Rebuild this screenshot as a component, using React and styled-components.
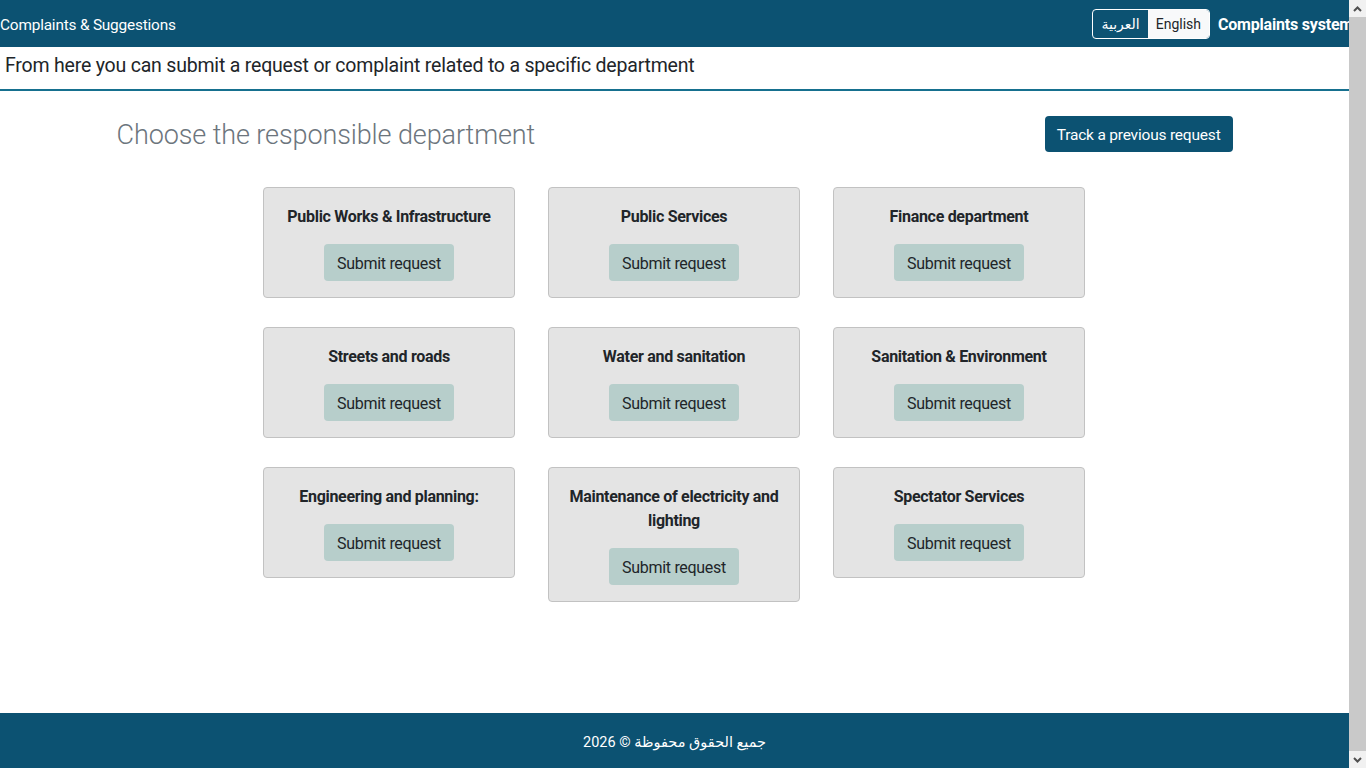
import React from 'react'
import styled, { createGlobalStyle } from 'styled-components'

const departments = [
  'Public Works & Infrastructure',
  'Public Services',
  'Finance department',
  'Streets and roads',
  'Water and sanitation',
  'Sanitation & Environment',
  'Engineering and planning:',
  'Maintenance of electricity and lighting',
  'Spectator Services',
]

const Chevron = ({ up }) => (
  <svg width="9" height="6" viewBox="0 0 9 6">
    <path
      d={up ? 'M1 5 L4.5 1.5 L8 5' : 'M1 1 L4.5 4.5 L8 1'}
      fill="none"
      stroke="#505050"
      strokeWidth="2"
    />
  </svg>
)

const App = () => {
  return (
    <>
      <GlobalStyle />
      <Page>
        <TopBar>
          <SiteTitle>Complaints &amp; Suggestions</SiteTitle>
          <RightGroup>
            <LangToggle>
              <LangButton lang="ar">العربية</LangButton>
              <LangButton active>English</LangButton>
            </LangToggle>
            <Brand>Complaints system</Brand>
          </RightGroup>
        </TopBar>

        <Intro>From here you can submit a request or complaint related to a specific department</Intro>

        <Main>
          <HeadRow>
            <Heading>Choose the responsible department</Heading>
            <TrackButton>Track a previous request</TrackButton>
          </HeadRow>

          <Grid>
            {departments.map((name) => (
              <Card key={name}>
                <CardTitle>{name}</CardTitle>
                <SubmitButton>Submit request</SubmitButton>
              </Card>
            ))}
          </Grid>
        </Main>

        <Footer>
          <FooterText dir="rtl">جميع الحقوق محفوظة © 2026</FooterText>
        </Footer>
      </Page>

      {/* page scrollbar as it shows in the screenshot */}
      <ScrollTrack>
        <ScrollArrow><Chevron up /></ScrollArrow>
        <ScrollThumb />
        <ScrollArrow><Chevron /></ScrollArrow>
      </ScrollTrack>
    </>
  )
}

export default App

const GlobalStyle = createGlobalStyle`
  body {
    margin: 0;
    overflow-x: hidden;
    font-family: Roboto, "Noto Sans", sans-serif;
    color: #212529;
    background: #fff;
  }
  * {
    box-sizing: border-box;
  }
`
const Page = styled.div`
  display: flex;
  flex-direction: column;
  width: calc(100vw - 17px);
  min-height: 100vh;
  overflow: hidden;
`
const TopBar = styled.header`
  display: flex;
  align-items: center;
  justify-content: space-between;
  height: 47px;
  background-color: #0c5272;
  color: #fff;
  white-space: nowrap;
`
const SiteTitle = styled.div`
  font-size: 15.4px;
  letter-spacing: -0.2px;
  padding-top: 2px;
`
const RightGroup = styled.div`
  display: flex;
  align-items: center;
  gap: 8px;
  margin-right: -4px;
`
const LangToggle = styled.div`
  display: flex;
  height: 30px;
  border: 1px solid #fff;
  border-radius: 4px;
  overflow: hidden;
`
const LangButton = styled.span`
  display: flex;
  align-items: center;
  padding: 0 8px;
  font-size: 14px;
  font-family: Roboto, "Noto Sans", "DejaVu Sans", sans-serif;
  background-color: ${(p) => (p.active ? '#f8f9fa' : 'transparent')};
  color: ${(p) => (p.active ? '#212529' : '#fff')};
`
const Brand = styled.div`
  font-size: 16px;
  font-weight: 700;
  letter-spacing: -0.2px;
  padding-top: 2px;
`
const Intro = styled.div`
  height: 44px;
  padding: 0 5px;
  font-size: 19.5px;
  line-height: 38px;
  letter-spacing: -0.2px;
  border-bottom: 2px solid #16708f;
`
const Main = styled.main`
  flex: 1;
  width: 100%;
  max-width: 1140px;
  margin: 0 auto;
  padding: 25px 12px 40px;
`
const HeadRow = styled.div`
  display: flex;
  align-items: center;
  justify-content: space-between;
`
const Heading = styled.h2`
  margin: 0;
  font-size: 27px;
  font-weight: 300;
  color: #6c757d;
  letter-spacing: -0.1px;
  padding-top: 2px;
`
const TrackButton = styled.button`
  height: 36px;
  padding: 2px 12px 0;
  border: none;
  border-radius: 4px;
  background-color: #0c5272;
  color: #fff;
  font-family: inherit;
  font-size: 15.5px;
  letter-spacing: -0.2px;
`
const Grid = styled.div`
  display: grid;
  grid-template-columns: repeat(3, 252px);
  column-gap: 33px;
  row-gap: 29px;
  justify-content: center;
  align-items: start;
  margin: 35px 1px 0 0;
`
const Card = styled.div`
  display: flex;
  flex-direction: column;
  align-items: center;
  padding: 17px 16px 16px;
  background-color: #e4e4e4;
  border: 1px solid #c2c2c2;
  border-radius: 4px;
  text-align: center;
`
const CardTitle = styled.h5`
  margin: 0 0 15px;
  font-size: 16px;
  font-weight: 700;
  line-height: 24px;
  letter-spacing: -0.3px;
`
const SubmitButton = styled.button`
  height: 37px;
  padding: 2px 13px 0;
  border: none;
  border-radius: 4px;
  background-color: #b7cecb;
  color: #212529;
  font-family: inherit;
  font-size: 16px;
  letter-spacing: -0.3px;
`
const Footer = styled.footer`
  display: flex;
  align-items: center;
  justify-content: center;
  height: 55px;
  background-color: #0c5272;
  color: #fff;
`
const FooterText = styled.div`
  font-size: 14.5px;
  padding-top: 3px;
  font-family: Roboto, "Noto Sans", "DejaVu Sans", sans-serif;
`
const ScrollTrack = styled.div`
  position: fixed;
  top: 0;
  right: 0;
  bottom: 0;
  width: 17px;
  display: flex;
  flex-direction: column;
  background-color: #f1f1f1;
`
const ScrollArrow = styled.div`
  display: flex;
  align-items: center;
  justify-content: center;
  height: 17px;
  flex-shrink: 0;
`
const ScrollThumb = styled.div`
  flex: 1;
  width: 17px;
  background-color: #c9c9c9;
`
